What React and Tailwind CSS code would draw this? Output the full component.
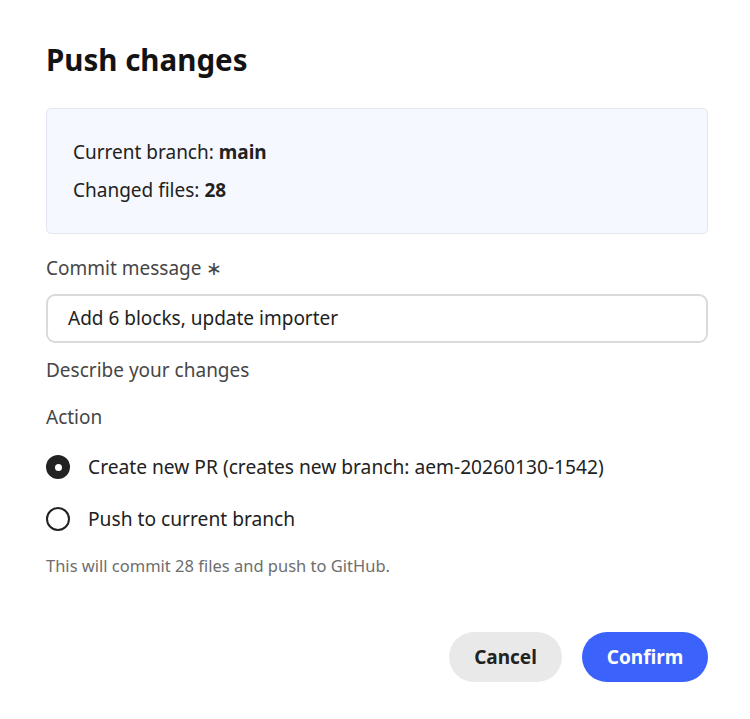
import React from "react";

export default function App() {
  return (
    <div
      className="w-[750px] h-[719px] bg-white pl-[46px] pr-[42px] pt-[40px] flex flex-col text-[#222222]"
      style={{ fontFamily: '"Noto Sans", "Open Sans", sans-serif' }}
    >
      <h1 className="text-[29.5px] leading-[40px] font-bold text-[#131313]">Push changes</h1>

      <div className="mt-[28px] h-[126px] rounded-[5px] border border-[#e3e6ee] bg-[#f5f8fe] px-[26px] py-[24px] flex flex-col">
        <div className="text-[19px] leading-[38px]">
          Current branch: <span className="font-bold">main</span>
        </div>
        <div className="text-[19px] leading-[38px]">
          Changed files: <span className="font-bold">28</span>
        </div>
      </div>

      <div className="mt-[22px] text-[19px] leading-[24px] text-[#464646]">
        Commit message <span className="text-[#464646]">∗</span>
      </div>

      <div className="mt-[14px] h-[49px] rounded-[9px] border-2 border-[#dadada] flex items-center px-[20px] text-[19px] text-[#222222]">
        Add 6 blocks, update importer
      </div>

      <div className="mt-[15px] text-[19px] leading-[24px] text-[#464646]">Describe your changes</div>

      <div className="mt-[23px] text-[19px] leading-[24px] text-[#464646]">Action</div>

      <div className="mt-[12px] flex flex-col">
        <label className="h-[52px] flex items-center gap-[18px]">
          <span className="w-[24px] h-[24px] rounded-full bg-[#222222] flex items-center justify-center">
            <span className="w-[7px] h-[7px] rounded-full bg-white" />
          </span>
          <span className="text-[19.2px]">Create new PR (creates new branch: aem-20260130-1542)</span>
        </label>
        <label className="h-[52px] flex items-center gap-[18px]">
          <span className="w-[24px] h-[24px] rounded-full border-[2.5px] border-[#222222]" />
          <span className="text-[19.2px]">Push to current branch</span>
        </label>
      </div>

      <div className="mt-[11px] text-[16.5px] leading-[20px] text-[#6e6e6e]">
        This will commit 28 files and push to GitHub.
      </div>

      <div className="mt-[56px] flex justify-end gap-[20px]">
        <button className="h-[50px] w-[113px] rounded-full bg-[#e9e9e9] text-[19px] font-bold text-[#222222]">
          Cancel
        </button>
        <button className="h-[50px] w-[126px] rounded-full bg-[#3b63fb] text-[19px] font-bold text-white">
          Confirm
        </button>
      </div>
    </div>
  );
}
